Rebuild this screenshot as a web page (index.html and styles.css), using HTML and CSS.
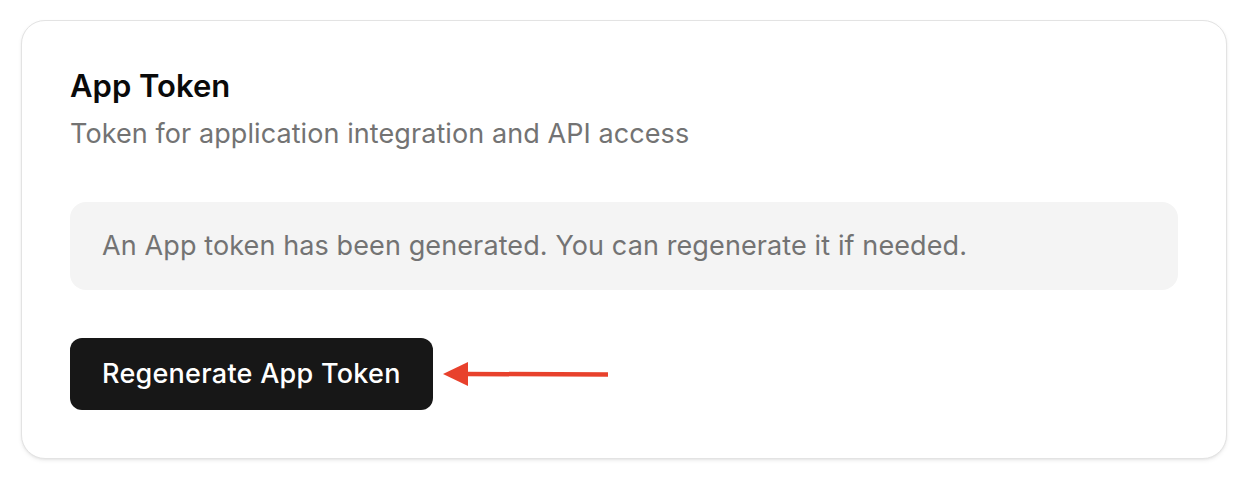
FILE: index.html
```html
<!DOCTYPE html>
<html lang="en">
<head>
<meta charset="utf-8">
<title>App Token</title>
<link rel="stylesheet" href="styles.css">
</head>
<body>
  <section class="card">
    <header class="card-header">
      <h2 class="card-title">App Token</h2>
      <p class="card-desc">Token for application integration and API access</p>
    </header>
    <div class="notice">An App token has been generated. You can regenerate it if needed.</div>
    <div class="actions">
      <button class="btn" type="button">Regenerate App Token</button>
      <svg class="arrow" width="166" height="26" viewBox="0 0 166 26" aria-hidden="true">
        <line x1="22" y1="13" x2="165" y2="13.4" stroke="#e8412c" stroke-width="4.5"/>
        <polygon points="0,13 25,1 25,25" fill="#e8412c"/>
      </svg>
    </div>
  </section>
</body>
</html>
```

FILE: styles.css
```css
* { box-sizing: border-box; }
html, body { background: #ffffff; }
body {
  margin: 0;
  padding: 20px 19px 20px 21px;
  font-family: Inter, "Noto Sans", "Liberation Sans", sans-serif;
  -webkit-font-smoothing: antialiased;
}
.card {
  border: 1px solid #e3e3e3;
  border-radius: 24px;
  padding: 48px;
  background: #fff;
  box-shadow: 0 2px 4px rgba(0,0,0,0.06), 0 1px 2px rgba(0,0,0,0.05);
}
.card-header { display: flex; flex-direction: column; gap: 13px; }
.card-title {
  margin: 0;
  font-size: 31px;
  line-height: 34px;
  font-weight: 600;
  color: #0a0a0a;
}
.card-desc {
  margin: 0;
  font-size: 27px;
  line-height: 36px;
  color: #737373;
  letter-spacing: 0.08px;
}
.notice {
  margin-top: 50px;
  background: #f4f4f4;
  border-radius: 16px;
  padding: 26px 32px;
  font-size: 27px;
  line-height: 36px;
  color: #737373;
  letter-spacing: 0.11px;
}
.actions {
  margin-top: 48px;
  display: flex;
  align-items: center;
  gap: 10px;
}
.btn {
  font-family: inherit;
  font-size: 27px;
  line-height: 36px;
  font-weight: 500;
  letter-spacing: 0.26px;
  color: #fff;
  background: #171717;
  border: none;
  border-radius: 12px;
  padding: 18px 32px;
  cursor: pointer;
}
.arrow { display: block; }
```
